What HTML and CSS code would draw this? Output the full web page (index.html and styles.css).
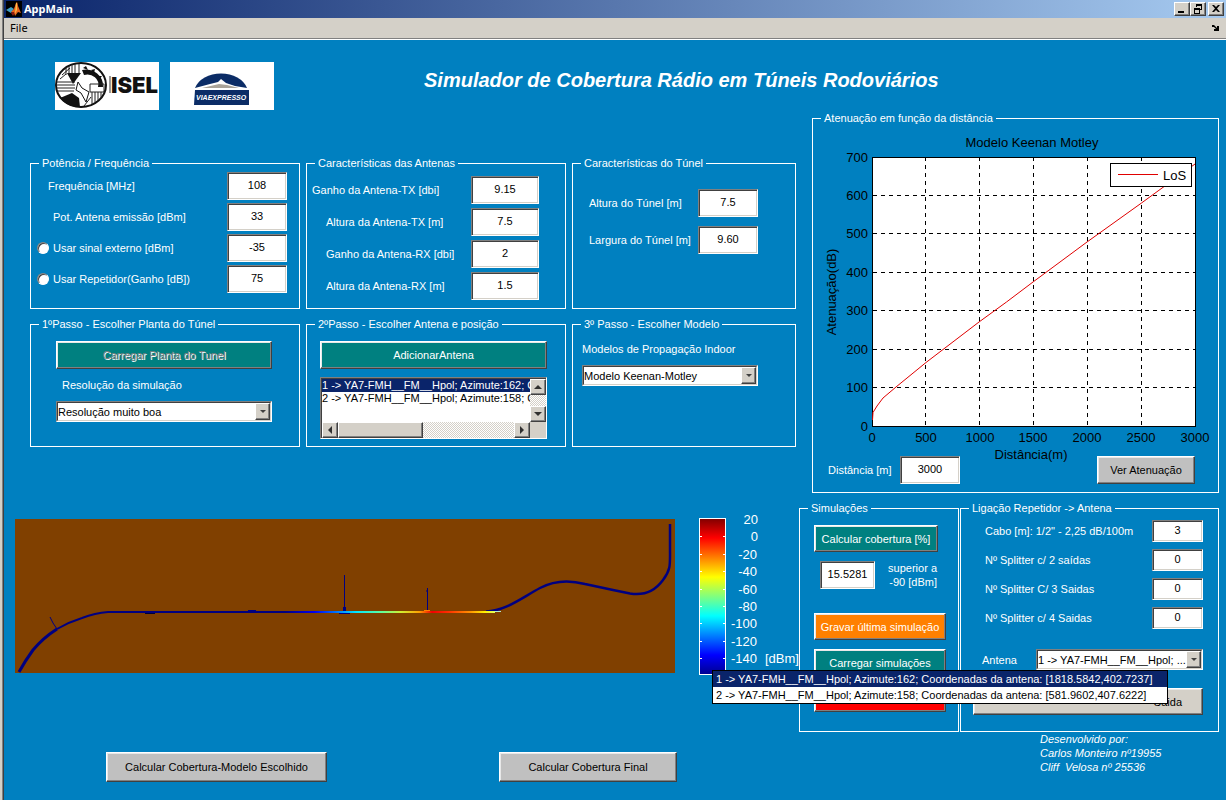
FILE: index.html
```html
<!DOCTYPE html>
<html lang="pt">
<head>
<meta charset="utf-8">
<title>AppMain</title>
<link rel="stylesheet" href="styles.css">
</head>
<body>
<div class="app">
  <header class="titlebar">
    <svg class="app-icon" viewBox="0 0 16 16" width="16" height="16" aria-hidden="true">
      <rect width="16" height="16" fill="#000"/>
      <path d="M0 9l5-3 3 2-3 4z" fill="#3f9fc4"/>
      <path d="M5 12l3-4 3-7 1 4-2 6-3 4z" fill="#8c1c10"/>
      <path d="M5 11l3-3 2-6 1-1 1 4 3 7-3-1-3 4-1-4z" fill="#e8641c"/>
      <path d="M10 2l1 0 0 7-2 4z" fill="#fbc04a"/>
    </svg>
    <h1 class="window-name">AppMain</h1>
    <div class="window-buttons">
      <button class="win-btn" aria-label="Minimizar"><svg viewBox="0 0 12 10" width="12" height="10"><path d="M2 7h6v2H2z"/></svg></button>
      <button class="win-btn" aria-label="Restaurar"><svg viewBox="0 0 12 10" width="12" height="10"><path d="M4 0h6v6H8V5h1V2H5v1H4zM2 4h6v6H2zM3 6v3h4V6z" fill-rule="evenodd"/></svg></button>
      <button class="win-btn win-close" aria-label="Fechar"><svg viewBox="0 0 12 10" width="12" height="10"><path d="M2 1h2l2 2 2-2h2L7 4.500l3 3.500H8L6 6 4 8H2l3-3.500z"/></svg></button>
    </div>
  </header>
  <nav class="menubar">
    <button class="menu-item">File</button>
    <svg class="dock" viewBox="0 0 8 8" width="8" height="8" aria-hidden="true"><path d="M0 1h2l3 3V2h2v5H2V5h2L2 3H0z"/></svg>
  </nav>

  <main class="workspace">
    <div class="banner">
      <svg class="logo" viewBox="0 0 104 48" width="104" height="48" role="img" aria-label="ISEL">
        <rect width="104" height="48" fill="#fff"/>
        <ellipse cx="26" cy="23" rx="25" ry="22" fill="#fff" stroke="#111" stroke-width="2"/>
        <path d="M12 11l14 0-8 11z" fill="#111"/>
        <path d="M27 8a17 16 0 0 1 21 17l-5 0a11 10 0 0 0-14-12z" fill="#111"/>
        <path d="M28 6l3-2 2 4zM36 8l4-1-1 4zM43 14l4 0-3 4z" fill="#111"/>
        <path d="M23 20l4 6 7 4-3 10-5-9-5-3z" fill="#fff" stroke="#111"/>
        <path d="M5 36l12-5 7 5 1 9a24 22 0 0 1-20-9z" fill="#111"/>
        <path d="M2 20h18M1 23h19M2 26h18M2 29h17M11 5v8M14 4v8M17 3v8M20 2v9M24 2v9M7 13l8-7M5 17l6-5M35 22h14v8H35zM37 30v12M40 30v10M43 30v8M46 30v6M29 44l7-9" fill="none" stroke="#222"/>
        <path d="M54 14h2v17h-2z" fill="#999"/>
        <text class="isel-text" x="56" y="31">ISEL</text>
      </svg>
      <svg class="logo" viewBox="0 0 104 48" width="104" height="48" role="img" aria-label="Viaexpresso">
        <rect width="104" height="48" fill="#fff"/>
        <path d="M25 26a27 20 0 0 1 52 0z" fill="#0b2c66"/>
        <path d="M25 26l15-4 8-2 3-3 5 4 9 3 12 2z" fill="#fff"/>
        <path d="M32 26l17-4 8 1 12 3z" fill="#aaa49a"/>
        <path d="M25 28h54v15H24z" fill="#0b2c66"/>
        <text class="via-text" x="26" y="38">VIAEXPRESSO</text>
      </svg>
      <h2 class="app-title">Simulador de Cobertura Rádio em Túneis Rodoviários</h2>
    </div>

    <div class="upper">
      <div class="setup">
        <fieldset class="panel power">
          <legend>Potência / Frequência</legend>
          <div class="row"><label for="freq">Frequência [MHz]</label><input class="field" id="freq" type="text" value="108"></div>
          <div class="row"><label class="inset" for="pot">Pot. Antena emissão [dBm]</label><input class="field" id="pot" type="text" value="33"></div>
          <div class="row"><input class="radio" type="radio" name="fonte" id="ext"><label for="ext">Usar sinal externo [dBm]</label><input class="field" type="text" value="-35" aria-label="Sinal externo"></div>
          <div class="row"><input class="radio" type="radio" name="fonte" id="rep"><label for="rep">Usar Repetidor(Ganho [dB])</label><input class="field" type="text" value="75" aria-label="Ganho do repetidor"></div>
        </fieldset>

        <fieldset class="panel antennas">
          <legend>Características das Antenas</legend>
          <div class="row"><label for="gtx">Ganho da Antena-TX [dbi]</label><input class="field" id="gtx" type="text" value="9.15"></div>
          <div class="row"><label class="inset" for="atx">Altura da Antena-TX [m]</label><input class="field" id="atx" type="text" value="7.5"></div>
          <div class="row"><label class="inset" for="grx">Ganho da Antena-RX [dbi]</label><input class="field" id="grx" type="text" value="2"></div>
          <div class="row"><label class="inset" for="arx">Altura da Antena-RX [m]</label><input class="field" id="arx" type="text" value="1.5"></div>
        </fieldset>

        <fieldset class="panel tunnel">
          <legend>Características do Túnel</legend>
          <div class="row"><label for="alt">Altura do Túnel [m]</label><input class="field" id="alt" type="text" value="7.5"></div>
          <div class="row"><label for="larg">Largura do Túnel [m]</label><input class="field" id="larg" type="text" value="9.60"></div>
        </fieldset>

        <fieldset class="panel step step-plan">
          <legend>1ºPasso - Escolher Planta do Túnel</legend>
          <button class="btn teal" disabled>Carregar Planta do Tunel</button>
          <label class="plan-label" for="res">Resolução da simulação</label>
          <div class="combo">
            <select id="res"><option>Resolução muito boa</option></select>
            <span class="drop"></span>
          </div>
        </fieldset>

        <fieldset class="panel step step-antenna">
          <legend>2ºPasso - Escolher Antena e posição</legend>
          <button class="btn teal">AdicionarAntena</button>
          <div class="listbox">
            <select class="list" size="3" aria-label="Antenas">
              <option selected>1 -&gt; YA7-FMH__FM__Hpol; Azimute:162; Coordenadas</option>
              <option>2 -&gt; YA7-FMH__FM__Hpol; Azimute:158; Coordenadas</option>
            </select>
            <div class="track vertical"><span class="knob up"></span><span class="knob down"></span></div>
            <div class="track horizontal"><span class="knob left"></span><span class="thumb"></span><span class="knob right"></span></div>
            <div class="corner"></div>
          </div>
        </fieldset>

        <fieldset class="panel step step-model">
          <legend>3º Passo - Escolher Modelo</legend>
          <label for="modelo">Modelos de Propagação Indoor</label>
          <div class="combo">
            <select id="modelo"><option>Modelo Keenan-Motley</option></select>
            <span class="drop"></span>
          </div>
        </fieldset>
      </div>

      <fieldset class="panel chart-panel">
        <legend>Atenuação em função da distância</legend>
        <svg class="chart" viewBox="0 0 405 331" role="img" aria-label="Modelo Keenan Motley">
          <rect x="59.500" y="32.500" width="323" height="269" fill="#fff" stroke="#000"/>
          <path class="grid" d="M112.500 32v269M166.500 32v269M220.500 32v269M274.500 32v269M328.500 32v269M60 70.500h322M60 108.500h322M60 147.500h322M60 185.500h322M60 224.500h322M60 262.500h322"/>
          <path d="M59.500 295L60 287.500 64 281 70 273 83 262 113 237.500 166 197 193.500 177 220 157 274 117 328.500 78 382 39" fill="none" stroke="#e00000"/>
          <rect x="297.500" y="38.500" width="81" height="23" fill="#fff" stroke="#000"/>
          <path d="M305 49.500h40" stroke="#e00000"/>
          <text x="350" y="55">LoS</text>
          <g text-anchor="middle">
            <text x="219" y="22">Modelo Keenan Motley</text>
            <text x="59" y="317">0</text><text x="113" y="317">500</text><text x="167" y="317">1000</text><text x="220" y="317">1500</text><text x="274" y="317">2000</text><text x="328" y="317">2500</text><text x="382" y="317">3000</text>
            <text x="218" y="334">Distância(m)</text>
            <text transform="translate(23 167) rotate(-90)">Atenuação(dB)</text>
          </g>
          <g text-anchor="end">
            <text x="55" y="37">700</text><text x="55" y="75">600</text><text x="55" y="113">500</text><text x="55" y="152">400</text><text x="55" y="190">300</text><text x="55" y="229">200</text><text x="55" y="267">100</text><text x="55" y="306">0</text>
          </g>
        </svg>
        <div class="chart-controls">
          <label for="dist">Distância [m]</label>
          <input class="field" id="dist" type="text" value="3000">
          <button class="btn gray">Ver Atenuação</button>
        </div>
      </fieldset>
    </div>

    <div class="lower">
      <svg class="map" viewBox="0 0 660 154" role="img" aria-label="Planta do túnel">
        <defs>
          <linearGradient id="signal" gradientUnits="userSpaceOnUse" x1="270" y1="0" x2="480" y2="0">
            <stop offset="0" stop-color="#000080"/><stop offset=".14" stop-color="#0000f0"/><stop offset=".24" stop-color="#0070ff"/><stop offset=".34" stop-color="#00e8ff"/><stop offset=".46" stop-color="#60ff9c"/><stop offset=".55" stop-color="#d0f030"/><stop offset=".64" stop-color="#ffa000"/><stop offset=".7" stop-color="#f00000"/><stop offset=".78" stop-color="#ff3000"/><stop offset=".88" stop-color="#ff9000"/><stop offset=".95" stop-color="#fff000"/><stop offset="1" stop-color="#e0ff60"/>
          </linearGradient>
        </defs>
        <rect width="660" height="154" fill="#804000"/>
        <g fill="none" stroke="#000080">
          <path d="M4 153Q10 142 18 131 28 119 42 110" stroke-width="3"/>
          <path d="M42 110Q54 103 67 99 80 94 93 93H275" stroke-width="2"/>
          <path d="M35 98l3 6 4 6M329.500 56v37"/>
          <path d="M412.500 69v23M411 72h2"/>
          <path d="M329.500 88v5" stroke-width="3"/>
          <path d="M471 92.500C490 92 505 80 525 69 540 61 555 61 570 65L598 71 615 74.500C630 77 640 72 648 61 656 51 655 45 655 30V5" stroke-width="2.500"/>
          <path d="M233 91.500h8M324 94.500h11"/>
          <path d="M130 94.500h10" stroke="#000030"/>
        </g>
        <path d="M270 92h210v2H270z" fill="url(#signal)"/>
        <path d="M480 92h6v1h-6z" fill="#b0e8d0"/>
        <path d="M409 91h6v1h-6z" fill="#ff8000"/>
      </svg>

      <svg class="colorbar" viewBox="0 0 101 158" role="img" aria-label="Escala em dBm">
        <defs>
          <linearGradient id="jet" x1="0" y1="0" x2="0" y2="1">
            <stop offset="0" stop-color="#800000"/><stop offset=".125" stop-color="#ff0000"/><stop offset=".375" stop-color="#ffff00"/><stop offset=".625" stop-color="#00ffff"/><stop offset=".875" stop-color="#0000ff"/><stop offset="1" stop-color="#00008f"/>
          </linearGradient>
        </defs>
        <rect x=".500" y=".500" width="26" height="156" fill="url(#jet)" stroke="#fff"/>
        <path d="M1 18.500h2M24 18.500h2M1 36.500h2M24 36.500h2M1 53.500h2M24 53.500h2M1 71.500h2M24 71.500h2M1 88.500h2M24 88.500h2M1 105.500h2M24 105.500h2M1 123.500h2M24 123.500h2M1 140.500h2M24 140.500h2" stroke="#fff"/>
        <g text-anchor="end">
          <text x="59" y="6">20</text><text x="59" y="23">0</text><text x="58" y="41">-20</text><text x="58" y="58">-40</text><text x="58" y="76">-60</text><text x="58" y="93">-80</text><text x="58" y="110">-100</text><text x="58" y="128">-120</text><text x="58" y="145">-140</text>
        </g>
        <text x="66" y="145">[dBm]</text>
      </svg>

      <fieldset class="panel simulations">
        <legend>Simulações</legend>
        <button class="btn teal">Calcular cobertura [%]</button>
        <div class="coverage">
          <input class="field" id="cov" type="text" value="15.5281">
          <label for="cov">superior a<br>-90 [dBm]</label>
        </div>
        <button class="btn orange">Gravar última simulação</button>
        <button class="btn teal">Carregar simulações</button>
        <button class="btn red" aria-label="Apagar simulações"></button>
      </fieldset>

      <fieldset class="panel repeater">
        <legend>Ligação Repetidor -&gt; Antena</legend>
        <div class="row"><label for="cabo">Cabo [m]: 1/2" - 2,25 dB/100m</label><input class="field" id="cabo" type="text" value="3"></div>
        <div class="row"><label for="s2">Nº Splitter c/ 2 saídas</label><input class="field" id="s2" type="text" value="0"></div>
        <div class="row"><label for="s3">Nº Splitter C/ 3 Saidas</label><input class="field" id="s3" type="text" value="0"></div>
        <div class="row"><label for="s4">Nº Splitter c/ 4 Saidas</label><input class="field" id="s4" type="text" value="0"></div>
        <div class="antenna-row">
          <label for="antena">Antena</label>
          <div class="combo">
            <select id="antena"><option>1 -&gt; YA7-FMH__FM__Hpol; ...</option></select>
            <span class="drop"></span>
          </div>
          <ul class="popup" role="listbox" aria-label="Antena">
            <li class="active" role="option" aria-selected="true">1 -&gt; YA7-FMH__FM__Hpol; Azimute:162; Coordenadas da antena: [1818.5842,402.7237]</li>
            <li role="option" aria-selected="false">2 -&gt; YA7-FMH__FM__Hpol; Azimute:158; Coordenadas da antena: [581.9602,407.6222]</li>
          </ul>
        </div>
        <button class="btn output">Saida</button>
      </fieldset>
    </div>

    <footer class="actions">
      <div><button class="btn gray wide">Calcular Cobertura-Modelo Escolhido</button></div>
      <div><button class="btn gray final">Calcular Cobertura Final</button></div>
      <p class="credits">Desenvolvido por:<br>Carlos Monteiro nº19955<br>Cliff&nbsp; Velosa nº 25536</p>
    </footer>
  </main>
</div>
</body>
</html>
```
FILE: styles.css
```css
* { box-sizing: border-box; }

body {
  margin: 0;
  background: #0080c0;
  color: #fff;
  font: 11px/14px "Liberation Sans", Arial, sans-serif;
}

button, input, select { font: inherit; margin: 0; border-radius: 0; }

.app {
  min-height: 100vh;
  border-left: 2px solid #d4d0c8;
  box-shadow: inset 1px 0 #808080, inset 2px 0 #404040;
  padding-left: 2px;
}

/* Window chrome */
.titlebar {
  display: flex;
  align-items: center;
  height: 18px;
  padding: 0 2px;
  background: linear-gradient(90deg, #0a246a, #a6caf0);
}
.window-name { margin: 0 0 0 2px; flex: 1; font: bold 11px/18px "Noto Sans", sans-serif; }
.window-buttons { display: flex; }
.win-btn {
  display: flex;
  width: 16px;
  height: 14px;
  padding: 1px;
  background: #d4d0c8;
  border: 1px solid;
  border-color: #fff #404040 #404040 #fff;
  box-shadow: inset -1px -1px #808080;
}
.win-close { margin-left: 2px; }
.menubar {
  display: flex;
  align-items: center;
  justify-content: space-between;
  height: 22px;
  padding: 0 6px 2px;
  background: #d4d0c8;
  border-bottom: 1px solid #fff;
  box-shadow: inset 0 -1px #808080;
}
.menu-item { padding: 0; border: 0; background: none; color: #000; font: 11px/18px "Noto Sans", sans-serif; }

.workspace { display: flex; flex-direction: column; }

.banner { display: flex; gap: 11px; padding: 22px 51px 1px; }
.app-title {
  margin: 6px 0 0 139px;
  font: italic bold 20px/24px "Liberation Sans", Arial, sans-serif;
  white-space: nowrap;
}
.isel-text { font: 900 22px Inter, sans-serif; fill: #111; }
.via-text { font: italic bold 7px "Liberation Sans", sans-serif; fill: #fff; }

/* Panels: --left is the content inset, which the legend does not follow */
.panel {
  --left: 0px;
  min-width: 0;
  margin: 0;
  padding: 0 0 0 var(--left);
  border: 1px solid #fff;
}
.panel legend { margin-left: calc(8px - var(--left)); padding: 0 3px; line-height: 14px; }

.upper {
  display: grid;
  grid-template-columns: 766fr 407fr;
  gap: 16px;
  padding: 0 7px 0 26px;
}
.setup {
  display: grid;
  grid-template-columns: 270fr 260fr 224fr;
  gap: 8px 6px;
  align-content: start;
  padding-top: 45px;
}
.row { display: flex; align-items: center; }
.row label { flex: 1; white-space: nowrap; }

.field {
  width: 60px;
  height: 28px;
  padding: 0 2px 2px;
  text-align: center;
  color: #000;
  background: #fff;
  border: 1px solid;
  border-color: #808080 #fff #fff #808080;
  box-shadow: inset 1px 1px #404040, inset -1px -1px #d4d0c8;
}

.power { --left: 17px; padding: 2px 12px 15px var(--left); }
.power .row + .row { margin-top: 3px; }
.power .inset { padding-left: 5px; }
.radio {
  appearance: none;
  width: 12px;
  height: 12px;
  margin: 0 4px 0 -11px;
  border: 1px solid;
  border-color: #808080 #fff #fff #808080;
  border-radius: 50%;
  background: #fff;
  box-shadow: inset 1px 1px #404040;
}

.antennas { --left: 5px; padding: 6px 26px 8px var(--left); }
.antennas .row + .row { margin-top: 4px; }
.antennas .inset { padding-left: 14px; }
.antennas .field { width: 68px; }

.tunnel { --left: 16px; padding: 19px 37px 8px var(--left); }
.tunnel .row + .row { margin-top: 9px; }

/* Buttons */
.btn {
  height: 28px;
  padding: 0 4px;
  color: #fff;
  white-space: nowrap;
  border: 1px solid;
  border-color: #fff #404040 #404040 #fff;
  box-shadow: inset -1px -1px #808080, inset 1px 1px #e8e8e8;
}
.teal { background: #008080; }
.orange { background: #ff8000; }
.red { background: #f00; }
.gray { background: #c0c0c0; color: #000; }
.btn:disabled { color: #808080; text-shadow: 1px 1px #fff; }

.step .btn, .step label, .step .combo { display: block; width: 100%; }
.step label { line-height: 16px; margin-bottom: 8px; }
.step .btn { margin-bottom: 8px; }
.step-plan { --left: 25px; padding: 10px 27px 23px var(--left); }
.step-plan .plan-label { padding-left: 6px; }
.step-antenna { --left: 13px; padding: 10px 18px 7px var(--left); }
.step-model { --left: 9px; padding: 10px 37px 8px var(--left); }

/* Drop-downs */
.combo {
  position: relative;
  height: 21px;
  border: 1px solid;
  border-color: #808080 #fff #fff #808080;
}
.combo select {
  appearance: none;
  display: block;
  width: 100%;
  height: 19px;
  padding: 0 15px 0 0;
  border: 1px solid;
  border-color: #404040 #d4d0c8 #d4d0c8 #404040;
  color: #000;
  background: #fff;
}
.drop, .knob, .thumb {
  background: #d4d0c8;
  border: 1px solid;
  border-color: #fff #404040 #404040 #fff;
  box-shadow: inset -1px -1px #808080;
}
.drop {
  position: absolute;
  top: 1px;
  right: 1px;
  bottom: 1px;
  width: 15px;
  display: grid;
  place-items: center;
  pointer-events: none;
}
.drop::before {
  content: "";
  border: 3px solid transparent;
  border-top-color: #404040;
  border-bottom: 0;
}

/* List with scroll bars */
.listbox {
  display: grid;
  grid-template-columns: 1fr 16px;
  grid-template-rows: 43px 16px;
  height: 62px;
  color: #000;
  background: #fff;
  border: 1px solid;
  border-color: #808080 #fff #fff #808080;
  box-shadow: inset 1px 1px #404040;
  padding: 1px 0 0 1px;
}
.list {
  min-width: 0;
  height: 43px;
  padding: 0;
  border: 0;
  background: #fff;
  overflow: hidden;
  outline: 0;
}
.list option { min-height: 13px; padding: 0; line-height: 13px; color: #000; }
.list option:checked { background: #0a246a linear-gradient(#0a246a, #0a246a); color: #fff !important; }
.track { display: flex; background: repeating-conic-gradient(#fff 0 25%, #d4d0c8 0 50%) 0 0 / 2px 2px; }
.vertical { flex-direction: column; justify-content: space-between; }
.knob { width: 16px; height: 16px; display: grid; place-items: center; }
.knob::before { content: ""; border: 4px solid transparent; }
.up::before { border-top: 0; border-bottom-color: #303030; }
.down::before { border-bottom: 0; border-top-color: #303030; }
.left::before { border-left: 0; border-right-color: #303030; }
.right::before { border-right: 0; border-left-color: #303030; }
.thumb { width: 41%; height: 16px; }
.horizontal .right { margin-left: auto; }
.corner { background: #d4d0c8; }

/* Chart */
.chart { display: block; width: 100%; overflow: visible; }
.chart text, .colorbar text { font: 13px "Liberation Sans", Arial, sans-serif; }
.grid { stroke: #000; stroke-dasharray: 4 4; fill: none; }
.chart-panel { padding-bottom: 8px; }
.chart-controls { display: flex; align-items: center; padding: 0 23px 0 15px; }
.chart-controls label { width: 72px; }
.chart-controls .btn { width: 98px; margin-left: auto; }

/* Coverage map, colour scale and link panels */
.lower {
  display: grid;
  grid-template-columns: 660fr 22px 101fr 158fr 259fr;
  column-gap: 1px;
  padding: 8px 7px 0 11px;
}
.map { width: 100%; margin-top: 18px; }
.colorbar { grid-column: 3; width: 100%; margin-top: 17px; overflow: visible; fill: #fff; }

.simulations {
  --left: 14px;
  display: flex;
  flex-direction: column;
  gap: 9px;
  margin-left: -2px;
  padding: 10px 12px 17px var(--left);
}
.simulations .btn { height: 27px; }
.simulations .btn:first-of-type { margin-right: 8px; }
.coverage { display: flex; align-items: center; padding: 0 9px 0 6px; margin-bottom: 15px; }
.coverage .field { width: 55px; }
.coverage label { flex: 1; text-align: right; }

.repeater { --left: 12px; padding: 5px 15px 16px var(--left); }
.repeater .row { padding-left: 12px; }
.repeater .row + .row { margin-top: 7px; }
.repeater .field { width: 51px; height: 22px; }
.antenna-row { position: relative; display: flex; align-items: center; margin: 20px 0 18px; padding-left: 9px; }
.antenna-row label { width: 54px; }
.antenna-row .combo { flex: 1; }
.output {
  display: block;
  width: 100%;
  height: 27px;
  padding-right: 20px;
  text-align: right;
  color: #000;
  background: #d4d0c8;
}
.popup {
  position: absolute;
  z-index: 2;
  top: 100%;
  right: 35px;
  width: 456px;
  margin: 0;
  padding: 0;
  list-style: none;
  color: #000;
  background: #fff;
  border: 1px solid #000;
  white-space: nowrap;
}
.popup li { padding: 0 3px; line-height: 16px; }
.popup .active { color: #fff; background: #0a246a; }

.actions {
  display: grid;
  grid-template-columns: 393fr 541fr 186fr;
  padding-left: 102px;
}
.actions .btn { height: 30px; margin-top: 20px; }
.wide { width: 221px; }
.final { width: 178px; }
.credits { margin: 0; font-style: italic; }
```
